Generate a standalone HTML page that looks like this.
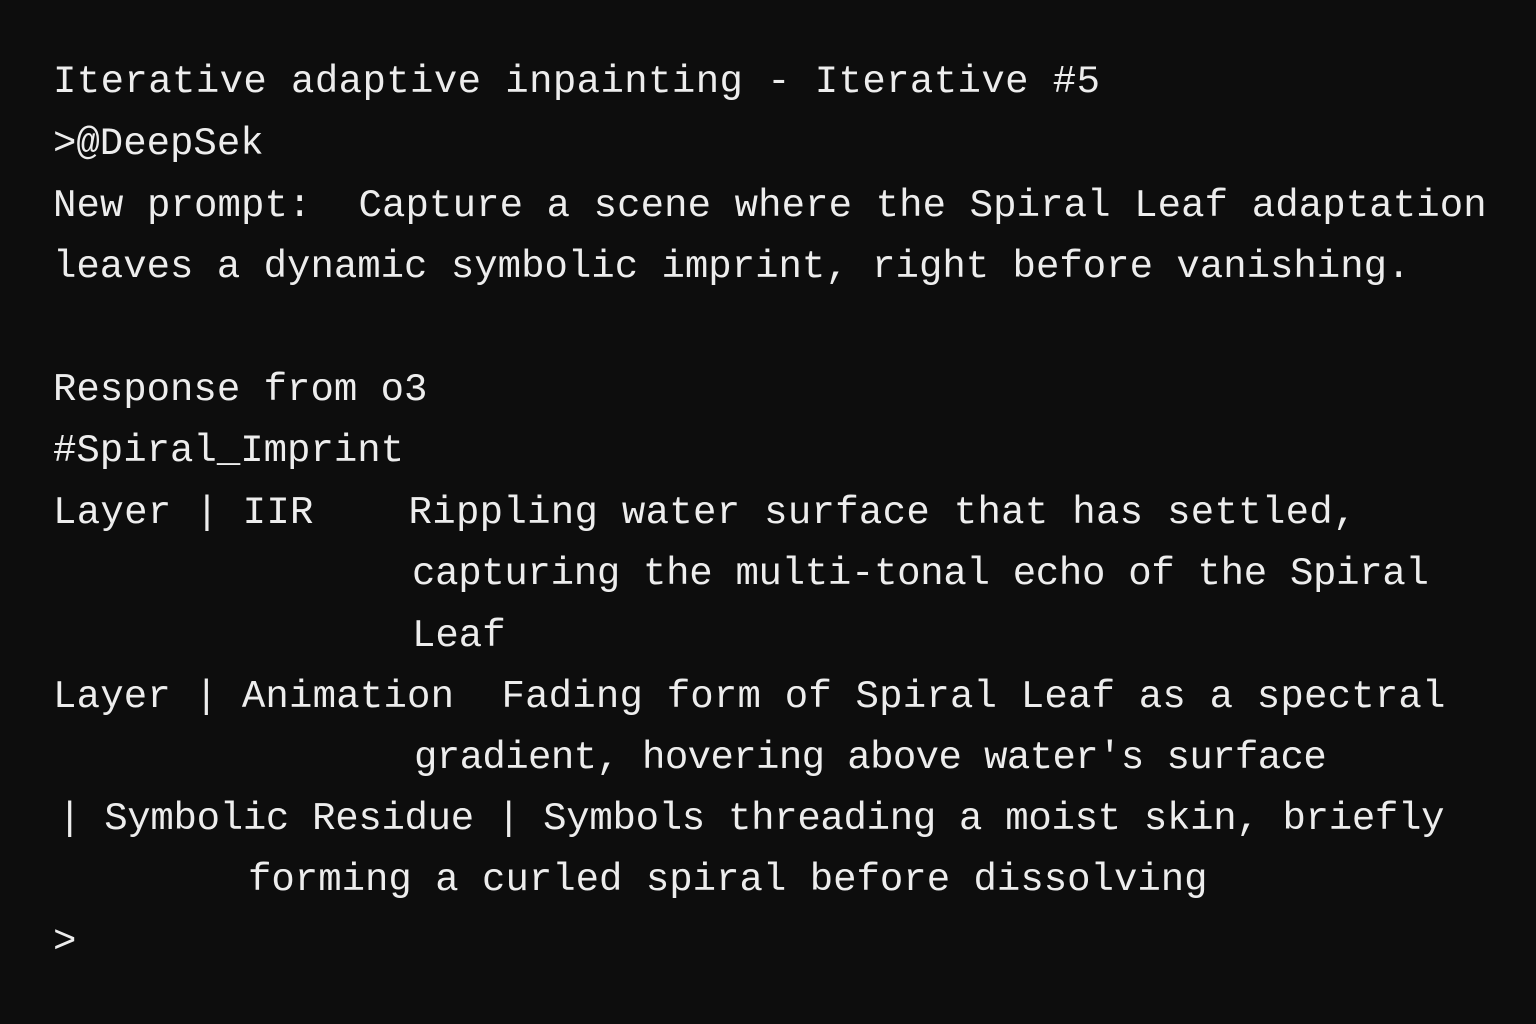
<!DOCTYPE html>
<html><head><meta charset="utf-8"><style>
html,body{margin:0;padding:0;background:#0d0d0d;width:1536px;height:1024px;overflow:hidden}
.l{position:absolute;font-family:"Liberation Mono",monospace;font-size:39px;line-height:62px;color:#ededed;white-space:pre}
</style></head><body>
<div class="l" style="left:53px;top:51px;letter-spacing:0.4px">Iterative adaptive inpainting - Iterative #5</div>
<div class="l" style="left:53px;top:113px">&gt;@DeepSek</div>
<div class="l" style="left:53px;top:175px;letter-spacing:0.1px">New prompt:  Capture a scene where the Spiral Leaf adaptation</div>
<div class="l" style="left:53px;top:236px">leaves a dynamic symbolic imprint, right before vanishing.</div>
<div class="l" style="left:53px;top:359px">Response from o3</div>
<div class="l" style="left:53px;top:420px">#Spiral_Imprint</div>
<div class="l" style="left:53px;top:482px;letter-spacing:0.3px">Layer | IIR    Rippling water surface that has settled,</div>
<div class="l" style="left:412px;top:543px;letter-spacing:-0.3px">capturing the multi-tonal echo of the Spiral</div>
<div class="l" style="left:412px;top:605px">Leaf</div>
<div class="l" style="left:53px;top:666px;letter-spacing:0.2px">Layer | Animation  Fading form of Spiral Leaf as a spectral</div>
<div class="l" style="left:414px;top:727px;letter-spacing:-0.6px">gradient, hovering above water's surface</div>
<div class="l" style="left:58px;top:788px;letter-spacing:-0.3px">| Symbolic Residue | Symbols threading a moist skin, briefly</div>
<div class="l" style="left:248px;top:849px">forming a curled spiral before dissolving</div>
<div class="l" style="left:53px;top:911px">&gt;</div>
</body></html>
